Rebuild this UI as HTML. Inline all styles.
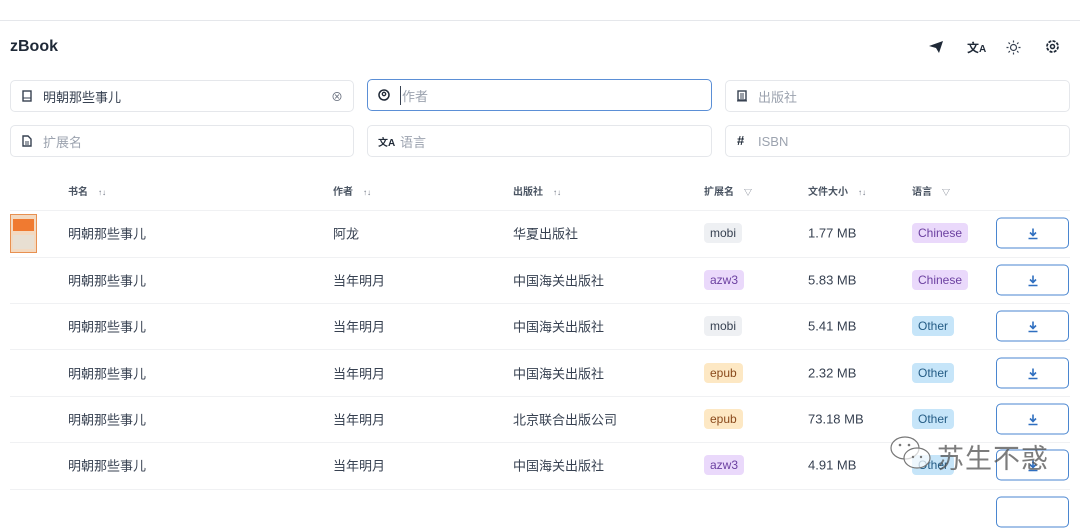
<!DOCTYPE html>
<html><head><meta charset="utf-8"><style>
*{box-sizing:border-box;margin:0;padding:0}
body{width:1080px;height:498px;overflow:hidden;background:#fff;font-family:"Liberation Sans","Noto Sans CJK SC",sans-serif;color:#374151;position:relative}
.top{position:absolute;left:0;top:20px;width:1080px;border-top:1px solid #e5e7eb}
.title{position:absolute;left:10px;top:38px;font-size:16px;font-weight:bold;color:#1f2937}
.inp{position:absolute;height:32px;border:1px solid #e5e7eb;border-radius:5px;font-size:13px;color:#9ca3af;display:flex;align-items:center;padding-left:32px}
.inp svg{position:absolute;left:10px;top:9px}
.inp.val{color:#374151}
.inp.focus{border:1.5px solid #5b8fd6}
.th{position:absolute;top:183px;font-size:10px;font-weight:bold;color:#4b5563}
.th span{font-weight:normal;font-size:8px;margin-left:10px;color:#6b7280}
.sep{position:absolute;left:10px;width:1060px;border-top:1px solid #f0f1f3}
.c{position:absolute;font-size:13px;color:#374151;transform:translateY(-50%)}
.tag{position:absolute;transform:translateY(-50%);font-size:12px;line-height:14px;padding:3px 6px;border-radius:4px}
.btn{position:absolute;left:996px;width:73px;height:31px;border:1px solid #4a86d0;border-radius:5px;transform:translateY(-50%)}
.btn svg{position:absolute;left:30px;top:9px}
</style></head><body>
<div class="top"></div>
<div class="title">zBook</div>
<svg style="position:absolute;left:928px;top:40px" width="16" height="14" viewBox="0 0 16 14"><path d="M1 6 L15 1 L11 13 L8 8 Z" fill="#1f2937"/></svg>
<div style="position:absolute;left:967px;top:39px;font-size:12px;font-weight:bold;color:#1f2937">文<span style="font-size:10px">A</span></div>
<svg style="position:absolute;left:1006px;top:40px" width="15" height="15" viewBox="0 0 15 15"><circle cx="7.5" cy="7.5" r="3" fill="none" stroke="#374151" stroke-width="1.2"/><g stroke="#374151" stroke-width="1.2"><path d="M7.5 0.5v2M7.5 12.5v2M0.5 7.5h2M12.5 7.5h2M2.5 2.5l1.4 1.4M11.1 11.1l1.4 1.4M2.5 12.5l1.4-1.4M11.1 3.9l1.4-1.4"/></g></svg>
<svg style="position:absolute;left:1045px;top:39px" width="15" height="15" viewBox="0 0 15 15"><circle cx="7.5" cy="7.5" r="5.5" fill="none" stroke="#1f2937" stroke-width="1.8" stroke-dasharray="3 1.3"/><circle cx="7.5" cy="7.5" r="2" fill="none" stroke="#1f2937" stroke-width="1.5"/></svg>

<div class="inp val" style="left:10px;top:80px;width:344px">明朝那些事儿<svg width="12" height="12"><rect x="2" y="1" width="8" height="10" fill="none" stroke="#374151" stroke-width="1.4"/><path d="M2 8h8" stroke="#374151"/></svg><span style="position:absolute;right:10px;top:7px;color:#6b7280;font-size:12px">⊗</span></div>
<div class="inp focus" style="left:367px;top:79px;width:345px;color:#9ca3af"><span style="border-left:1px solid #374151;padding-left:1px">作者</span><svg width="12" height="12"><circle cx="6" cy="6" r="5" fill="none" stroke="#1f2937" stroke-width="1.5"/><circle cx="6" cy="5" r="1.7" fill="none" stroke="#1f2937" stroke-width="1.3"/></svg></div>
<div class="inp" style="left:725px;top:80px;width:345px">出版社<svg width="12" height="12"><rect x="2" y="1" width="8" height="9" fill="none" stroke="#374151" stroke-width="1.4"/><path d="M1 11h10M5 3v6M7 3v6" stroke="#374151"/></svg></div>
<div class="inp" style="left:10px;top:125px;width:344px">扩展名<svg width="12" height="12"><path d="M2 1h5l3 3v7H2z" fill="none" stroke="#374151" stroke-width="1.4"/><path d="M4 7h4M4 9h4" stroke="#374151"/></svg></div>
<div class="inp" style="left:367px;top:125px;width:345px">语言<span style="position:absolute;left:10px;top:8px;font-size:10px;font-weight:bold;color:#1f2937">文A</span></div>
<div class="inp" style="left:725px;top:125px;width:345px">ISBN<span style="position:absolute;left:11px;top:7px;font-size:13px;font-weight:bold;color:#1f2937">#</span></div>

<div class="th" style="left:68px">书名<span>↑↓</span></div>
<div class="th" style="left:333px">作者<span>↑↓</span></div>
<div class="th" style="left:513px">出版社<span>↑↓</span></div>
<div class="th" style="left:704px">扩展名<span>▽</span></div>
<div class="th" style="left:808px">文件大小<span>↑↓</span></div>
<div class="th" style="left:912px">语言<span>▽</span></div>

<div class="sep" style="top:210px"></div>
<div class="sep" style="top:257px"></div>
<div class="sep" style="top:303px"></div>
<div class="sep" style="top:349px"></div>
<div class="sep" style="top:396px"></div>
<div class="sep" style="top:442px"></div>
<div class="sep" style="top:489px"></div>

<div style="position:absolute;left:10px;top:214px;width:27px;height:39px;background:#f3d9c0;border:1px solid #e89050"><div style="margin:4px 2px;height:12px;background:#f07a30"></div><div style="margin:0 2px;height:14px;background:#e8dfd2"></div></div>

<div class="c" style="left:68px;top:233px">明朝那些事儿</div><div class="c" style="left:333px;top:233px">阿龙</div><div class="c" style="left:513px;top:233px">华夏出版社</div>
<div class="tag" style="left:704px;top:233px;background:#eef0f3;color:#374151">mobi</div><div class="c" style="left:808px;top:233px">1.77 MB</div><div class="tag" style="left:912px;top:233px;background:#ead9fb;color:#6b3fa0">Chinese</div>

<div class="c" style="left:68px;top:280px">明朝那些事儿</div><div class="c" style="left:333px;top:280px">当年明月</div><div class="c" style="left:513px;top:280px">中国海关出版社</div>
<div class="tag" style="left:704px;top:280px;background:#ead9fb;color:#6b3fa0">azw3</div><div class="c" style="left:808px;top:280px">5.83 MB</div><div class="tag" style="left:912px;top:280px;background:#ead9fb;color:#6b3fa0">Chinese</div>

<div class="c" style="left:68px;top:326px">明朝那些事儿</div><div class="c" style="left:333px;top:326px">当年明月</div><div class="c" style="left:513px;top:326px">中国海关出版社</div>
<div class="tag" style="left:704px;top:326px;background:#eef0f3;color:#374151">mobi</div><div class="c" style="left:808px;top:326px">5.41 MB</div><div class="tag" style="left:912px;top:326px;background:#c6e5f9;color:#245c85">Other</div>

<div class="c" style="left:68px;top:373px">明朝那些事儿</div><div class="c" style="left:333px;top:373px">当年明月</div><div class="c" style="left:513px;top:373px">中国海关出版社</div>
<div class="tag" style="left:704px;top:373px;background:#fde8c4;color:#8a4a1c">epub</div><div class="c" style="left:808px;top:373px">2.32 MB</div><div class="tag" style="left:912px;top:373px;background:#c6e5f9;color:#245c85">Other</div>

<div class="c" style="left:68px;top:419px">明朝那些事儿</div><div class="c" style="left:333px;top:419px">当年明月</div><div class="c" style="left:513px;top:419px">北京联合出版公司</div>
<div class="tag" style="left:704px;top:419px;background:#fde8c4;color:#8a4a1c">epub</div><div class="c" style="left:808px;top:419px">73.18 MB</div><div class="tag" style="left:912px;top:419px;background:#c6e5f9;color:#245c85">Other</div>

<div class="c" style="left:68px;top:465px">明朝那些事儿</div><div class="c" style="left:333px;top:465px">当年明月</div><div class="c" style="left:513px;top:465px">中国海关出版社</div>
<div class="tag" style="left:704px;top:465px;background:#ead9fb;color:#6b3fa0">azw3</div><div class="c" style="left:808px;top:465px">4.91 MB</div><div class="tag" style="left:912px;top:465px;background:#c6e5f9;color:#245c85">Other</div>

<div class="btn" style="top:233px"><svg width="12" height="12"><path d="M6 1v7M3 5l3 3 3-3M1.5 11h9" stroke="#2f6fc0" stroke-width="1.6" fill="none"/></svg></div>
<div class="btn" style="top:280px"><svg width="12" height="12"><path d="M6 1v7M3 5l3 3 3-3M1.5 11h9" stroke="#2f6fc0" stroke-width="1.6" fill="none"/></svg></div>
<div class="btn" style="top:326px"><svg width="12" height="12"><path d="M6 1v7M3 5l3 3 3-3M1.5 11h9" stroke="#2f6fc0" stroke-width="1.6" fill="none"/></svg></div>
<div class="btn" style="top:373px"><svg width="12" height="12"><path d="M6 1v7M3 5l3 3 3-3M1.5 11h9" stroke="#2f6fc0" stroke-width="1.6" fill="none"/></svg></div>
<div class="btn" style="top:419px"><svg width="12" height="12"><path d="M6 1v7M3 5l3 3 3-3M1.5 11h9" stroke="#2f6fc0" stroke-width="1.6" fill="none"/></svg></div>
<div class="btn" style="top:465px"><svg width="12" height="12"><path d="M6 1v7M3 5l3 3 3-3M1.5 11h9" stroke="#2f6fc0" stroke-width="1.6" fill="none"/></svg></div>
<div class="btn" style="top:512px"></div>

<svg style="position:absolute;left:887px;top:432px" width="50" height="40" viewBox="0 0 50 40"><ellipse cx="18" cy="16" rx="14" ry="11" fill="rgba(255,255,255,.6)" stroke="#777" stroke-width="1.2"/><ellipse cx="30" cy="26" rx="13" ry="10" fill="rgba(255,255,255,.7)" stroke="#777" stroke-width="1.2"/><circle cx="13" cy="13" r="1.3" fill="#777"/><circle cx="22" cy="13" r="1.3" fill="#777"/><circle cx="26" cy="25" r="1.2" fill="#777"/><circle cx="34" cy="25" r="1.2" fill="#777"/></svg>
<div style="position:absolute;left:937px;top:437px;font-size:27px;color:rgba(80,80,80,.75);letter-spacing:1px">苏生不惑</div>
</body></html>
